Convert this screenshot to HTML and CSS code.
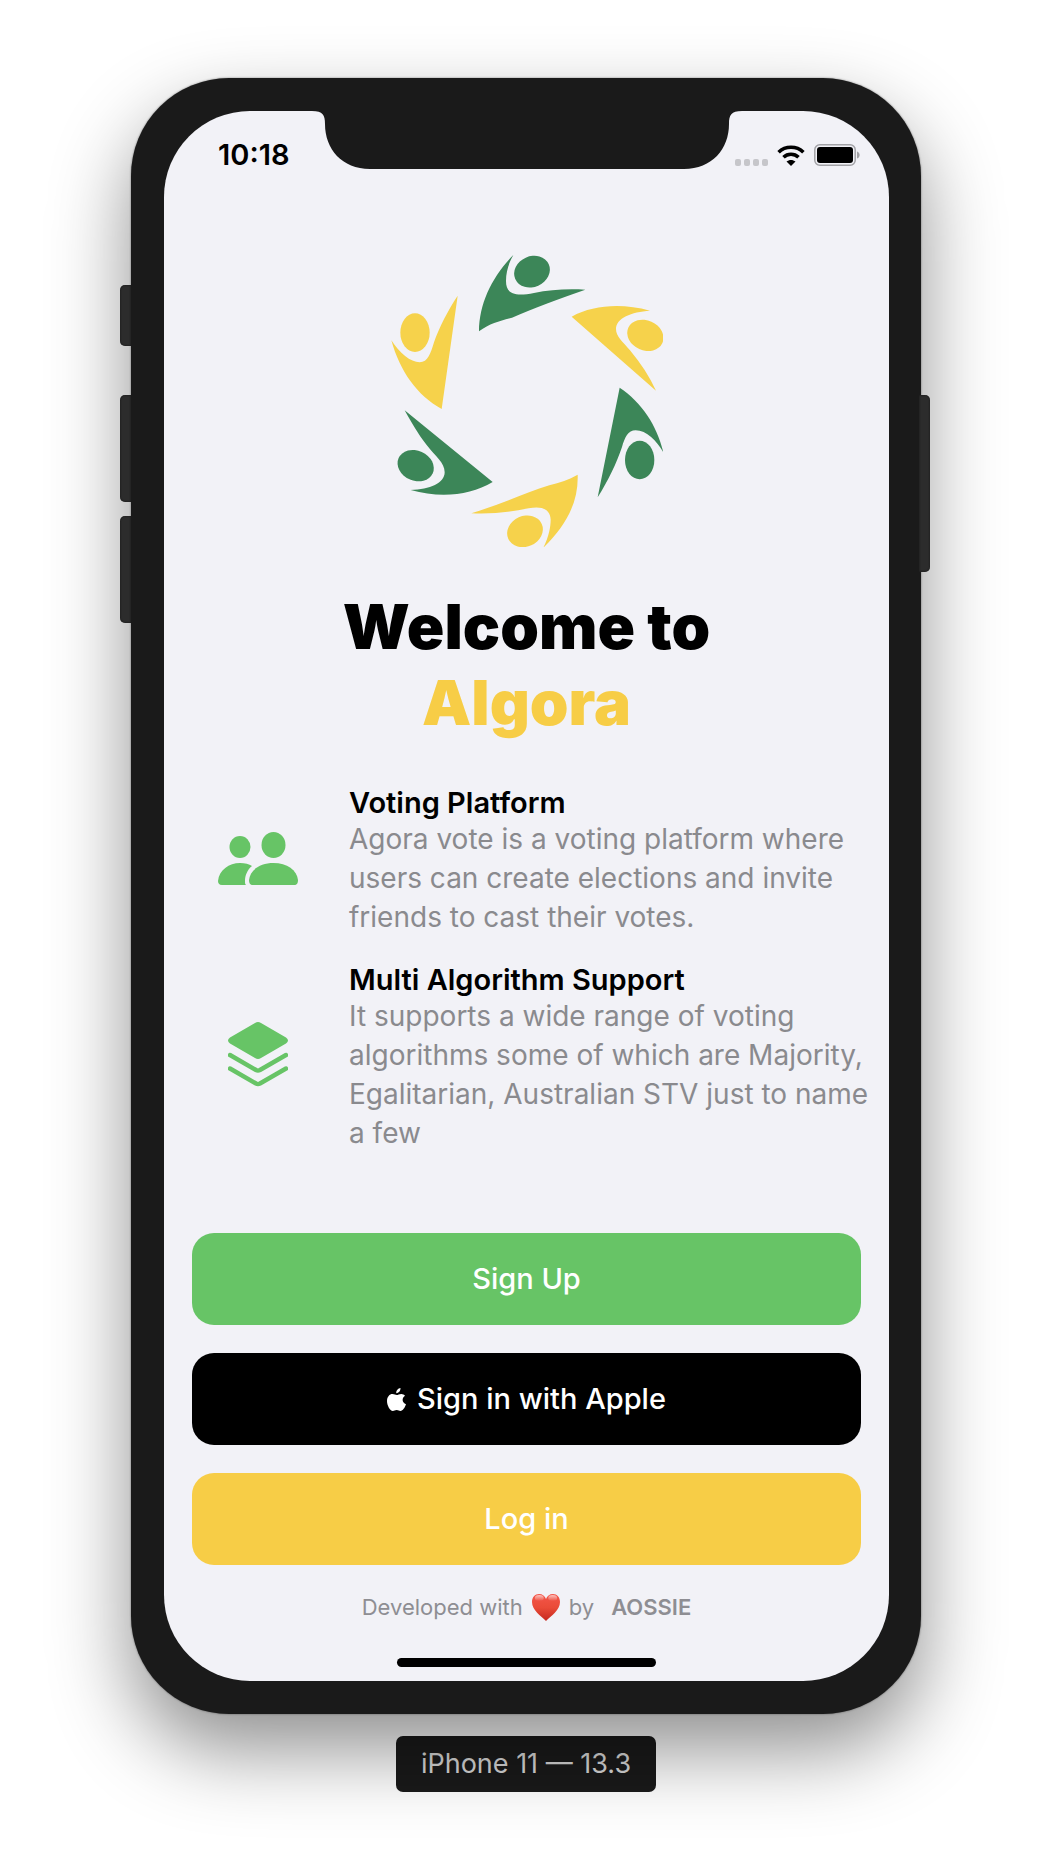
FILE: index.html
```html
<!DOCTYPE html>
<html lang="en">
<head>
<meta charset="utf-8">
<meta name="viewport" content="width=device-width, initial-scale=1">
<title>Algora – Welcome</title>
<link rel="stylesheet" href="styles.css">
</head>
<body>
<div class="stage">
  <div class="device">
    <span class="key key-mute"></span>
    <span class="key key-up"></span>
    <span class="key key-down"></span>
    <span class="key key-power"></span>
    <div class="screen">
      <svg class="notch" viewBox="0 0 430 59" aria-hidden="true"><path d="M0 0H430V1C419 1 417 5 417 14C417 39 400 59 372 59H58C30 59 13 39 13 14C13 5 11 1 0 1Z"/></svg>
      <header class="status">
        <time class="clock">10:18</time>
        <div class="indicators">
          <svg class="signal" viewBox="0 0 33 7" aria-hidden="true"><rect width="6" height="7" rx="2"/><rect x="9" width="6" height="7" rx="2"/><rect x="18" width="6" height="7" rx="2"/><rect x="27" width="6" height="7" rx="2"/></svg>
          <svg class="wifi" viewBox="0 0 28 21" aria-hidden="true"><path class="arc" d="M1.6 7.2C8.4 .6 19.600 .6 26.400 7.200M6.500 12.300C10.700 8.300 17.300 8.300 21.500 12.300"/><path d="M9.500 16.500C12 14.400 16 14.400 18.500 16.500L14 21Z"/></svg>
          <svg class="battery" viewBox="0 0 46 22" aria-hidden="true"><rect class="case" x=".8" y=".8" width="40.400" height="20.400" rx="5"/><rect x="3" y="3" width="36" height="16" rx="3"/><path class="cap" d="M43 7.500C46.500 8.500 46.500 13.500 43 14.500Z"/></svg>
        </div>
      </header>
      <main class="content">
        <svg class="logo" viewBox="0 0 816 876" role="img" aria-label="Algora logo">
          <g transform="translate(-33 -46)">
            <g class="green">
              <path d="M400 46C336 112 298 190 297 275C330 250 360 244 396 234C460 206 535 178 616 150C560 147 510 150 462 160C400 172 378 160 378 124C378 96 386 70 400 46Z"/>
              <ellipse cx="456" cy="96" rx="55" ry="46" transform="rotate(-24 456 96)"/>
              <path d="M719 444C786 488 832 560 850 638C832 606 800 572 767 572C744 572 734 594 726 622C710 670 684 724 653 773Z"/>
              <ellipse cx="779" cy="661" rx="44" ry="58"/>
              <path d="M74 512L338 727C270 768 180 776 92 751C150 750 194 730 194 698C194 668 166 650 140 616C112 580 94 548 74 512Z"/>
              <ellipse cx="107" cy="678" rx="56" ry="45" transform="rotate(24 107 678)"/>
            </g>
            <g class="gold">
              <path d="M575 231C640 196 724 190 810 213C754 216 708 236 708 268C708 290 728 306 750 332C782 370 808 410 828 453Z"/>
              <ellipse cx="796" cy="287" rx="56" ry="45" transform="rotate(24 796 287)"/>
              <path d="M233 168L185 508C112 468 60 396 34 302C58 340 92 368 119 368C144 368 152 340 162 308C178 262 204 212 233 168Z"/>
              <ellipse cx="105" cy="279" rx="44" ry="58"/>
              <path d="M593 705C596 790 556 860 490 924C506 892 512 862 512 840C511 810 488 798 446 806C388 818 334 824 274 821C360 794 436 760 508 737C540 729 566 720 593 705Z"/>
              <ellipse cx="435" cy="875" rx="55" ry="46" transform="rotate(-24 435 875)"/>
            </g>
          </g>
        </svg>
        <h1 class="title">Welcome to <span class="brand">Algora</span></h1>
        <section class="features">
          <article class="feature">
            <svg class="icon people" viewBox="0 0 80 53" aria-hidden="true"><ellipse cx="22" cy="15" rx="10.500" ry="11"/><ellipse cx="55.500" cy="13" rx="12" ry="13"/><path d="M4 53C1 53 0 51 0 49C1 38 11 31 22 31C27 31 31 32 34 34C29 38 27 44 27 49C27 51 27 52 28 53Z"/><path d="M35 53C32 53 31 51 31 48C32 38 42 31 55.500 31S79 38 80 48C80 51 79 53 76 53Z"/></svg>
            <div class="copy">
              <h2>Voting Platform</h2>
              <p>Agora vote is a voting platform where users can create elections and invite friends to cast their votes.</p>
            </div>
          </article>
          <article class="feature">
            <svg class="icon layers" viewBox="0 0 60 65" aria-hidden="true"><path d="M27 1Q30-1 33 1L58 15.500Q62 18.500 58 21.500L33 36Q30 38 27 36L2 21.500Q-2 18.500 2 15.500Z"/><path class="edge" d="M2 33L28 48Q30 49 32 48L58 33M2 46.500L28 61.500Q30 62.500 32 61.500L58 46.500"/></svg>
            <div class="copy">
              <h2>Multi Algorithm Support</h2>
              <p>It supports a wide range of voting algorithms some of which are Majority, Egalitarian, Australian STV just to name a few</p>
            </div>
          </article>
        </section>
        <div class="actions">
          <button class="btn btn-green" type="button">Sign Up</button>
          <button class="btn btn-black" type="button"><svg class="apple" viewBox="0 0 19 23" aria-hidden="true"><path d="M13.500 0C13.700 3 11.500 5.200 9.300 5.200C9 2.600 11.200.3 13.500 0ZM18 7.800C14.500 10 15 14.800 19 16.300C17.800 19.800 15.800 22.900 13.500 22.900C12 22.900 11.500 22 9.700 22C7.800 22 7.300 22.900 5.800 22.900C3 22.900 0 17.500 0 13C0 8.700 2.600 6 5.500 6C7.300 6 8.500 7 9.700 7C10.800 7 12.300 5.900 14.400 5.900C15.800 5.900 17.200 6.600 18 7.800Z"/></svg>Sign in with Apple</button>
          <button class="btn btn-gold" type="button">Log in</button>
        </div>
      </main>
      <footer class="credit">
        <span>Developed with</span>
        <svg class="heart" viewBox="0 0 28 27" role="img" aria-label="love"><defs><linearGradient id="heart-fill" x1="0" y1="0" x2="0" y2="1"><stop offset="0" stop-color="#f4564a"/><stop offset=".5" stop-color="#ea4b38"/><stop offset="1" stop-color="#c5281f"/></linearGradient><linearGradient id="heart-shine" x1="0" y1="0" x2="0" y2="1"><stop offset="0" stop-color="#fff" stop-opacity=".65"/><stop offset="1" stop-color="#fff" stop-opacity="0"/></linearGradient></defs><path fill="url(#heart-fill)" d="M14 27C9 22 0 16 0 8C0 3 3 0 7 0C10.500 0 13 2 14 5C15 2 17.500 0 21 0C25 0 28 3 28 8C28 16 19 22 14 27Z"/><ellipse fill="url(#heart-shine)" cx="7.300" cy="4" rx="4.500" ry="3"/><ellipse fill="url(#heart-shine)" cx="20.700" cy="4" rx="4.500" ry="3"/></svg>
        <span>by</span>
        <strong>AOSSIE</strong>
      </footer>
      <div class="home-bar"></div>
    </div>
  </div>
  <p class="caption">iPhone 11 — 13.3</p>
</div>
</body>
</html>
```
FILE: styles.css
```css
* { box-sizing: border-box; }

body {
  margin: 0;
  background: #fff;
  color: #000;
  font-family: Inter, "Liberation Sans", sans-serif;
}

h1, h2, p { margin: 0; }

svg { display: block; flex: none; }

.stage {
  display: flex;
  flex-direction: column;
  align-items: center;
  gap: 22px;
  padding: 78px 16px 72px;
}

.device {
  position: relative;
  width: 100%;
  max-width: 790px;
  padding: 33px 32px 33px 33px;
  border-radius: 98px;
  background: #1a1a1a;
  box-shadow: 0 0 2px rgba(0, 0, 0, .5), 0 36px 80px rgba(0, 0, 0, .44);
}

/* Hardware keys on the sides of the case */
.key {
  position: absolute;
  left: -11px;
  width: 11px;
  border-radius: 5px 0 0 5px;
  background: #2c2c2c;
  box-shadow: inset 0 0 2px #111;
}
.key-mute { top: 207px; height: 61px; }
.key-up { top: 317px; height: 107px; }
.key-down { top: 438px; height: 107px; }
.key-power {
  top: 317px;
  left: auto;
  right: -9px;
  width: 11px;
  height: 177px;
  border-radius: 0 5px 5px 0;
}

.screen {
  position: relative;
  display: flex;
  flex-direction: column;
  align-items: center;
  padding-bottom: 14px;
  border-radius: 86px;
  background: #f2f2f7;
}

.notch {
  position: absolute;
  top: -1px;
  left: 50%;
  width: 430px;
  height: 59px;
  transform: translateX(-50%);
  fill: #1a1a1a;
}

.status {
  display: flex;
  align-self: stretch;
  justify-content: space-between;
  align-items: center;
  padding: 26px 29px 0 54px;
}
.clock { font-size: 29px; font-weight: 600; line-height: 36px; }
.indicators { display: flex; align-items: flex-end; gap: 9px; }
.signal { width: 33px; height: 7px; fill: #c6c6ca; }
.wifi { width: 28px; height: 21px; }
.wifi .arc { fill: none; stroke: #000; stroke-width: 3.600; }
.battery { width: 46px; height: 22px; }
.battery .case { fill: none; stroke: #a2a2a6; stroke-width: 1.500; }
.battery .cap { fill: #a2a2a6; }

.content {
  display: flex;
  flex-direction: column;
  align-items: center;
  align-self: stretch;
}

.logo { width: 272px; height: 292px; margin-top: 82px; }
.green { fill: #3c8658; }
.gold { fill: #f6d24b; }

.title {
  margin-top: 42px;
  font-size: 62px;
  font-weight: 900;
  line-height: 76px;
  text-align: center;
}
.brand { display: block; color: #f7cd46; }

.features {
  display: flex;
  flex-direction: column;
  align-self: stretch;
  gap: 25px;
  margin-top: 44px;
  padding: 0 12px 0 54px;
}
.feature {
  display: grid;
  grid-template-columns: 80px 1fr;
  column-gap: 51px;
  align-items: center;
  justify-items: center;
  fill: #67c466;
}
.copy { justify-self: stretch; }
.copy h2 { font-size: 29px; font-weight: 600; line-height: 35px; }
.copy p { color: #8a8a8e; font-size: 28px; line-height: 39px; }
.icon { margin-bottom: 6px; }
.people { width: 80px; height: 53px; }
.layers { width: 60px; height: 65px; }
.layers .edge { fill: none; stroke: #67c466; stroke-width: 4.500; stroke-linecap: round; }

.actions {
  display: flex;
  flex-direction: column;
  align-self: stretch;
  gap: 28px;
  margin-top: 80px;
  padding: 0 28px;
}
.btn {
  display: flex;
  align-items: center;
  justify-content: center;
  gap: 11px;
  height: 92px;
  border: 0;
  border-radius: 22px;
  color: #fff;
  font: 500 29px/36px Inter, "Liberation Sans", sans-serif;
}
.btn-green { background: #67c466; }
.btn-black { background: #000; }
.btn-gold { background: #f7cd46; }
.apple { width: 19px; height: 23px; fill: #fff; }

.credit {
  display: flex;
  align-items: center;
  gap: 9px;
  margin-top: 28px;
  color: #8e8e93;
  font-size: 22px;
  line-height: 28px;
}
.credit strong { margin-left: 8px; font-weight: 600; }
.heart { width: 28px; height: 27px; }

.home-bar {
  width: 259px;
  height: 9px;
  margin-top: 37px;
  border-radius: 5px;
  background: #000;
}

.caption {
  padding: 10px 25px;
  border-radius: 7px;
  background: #1a1a1a;
  color: #dadada;
  font-size: 27px;
  line-height: 36px;
}
```
